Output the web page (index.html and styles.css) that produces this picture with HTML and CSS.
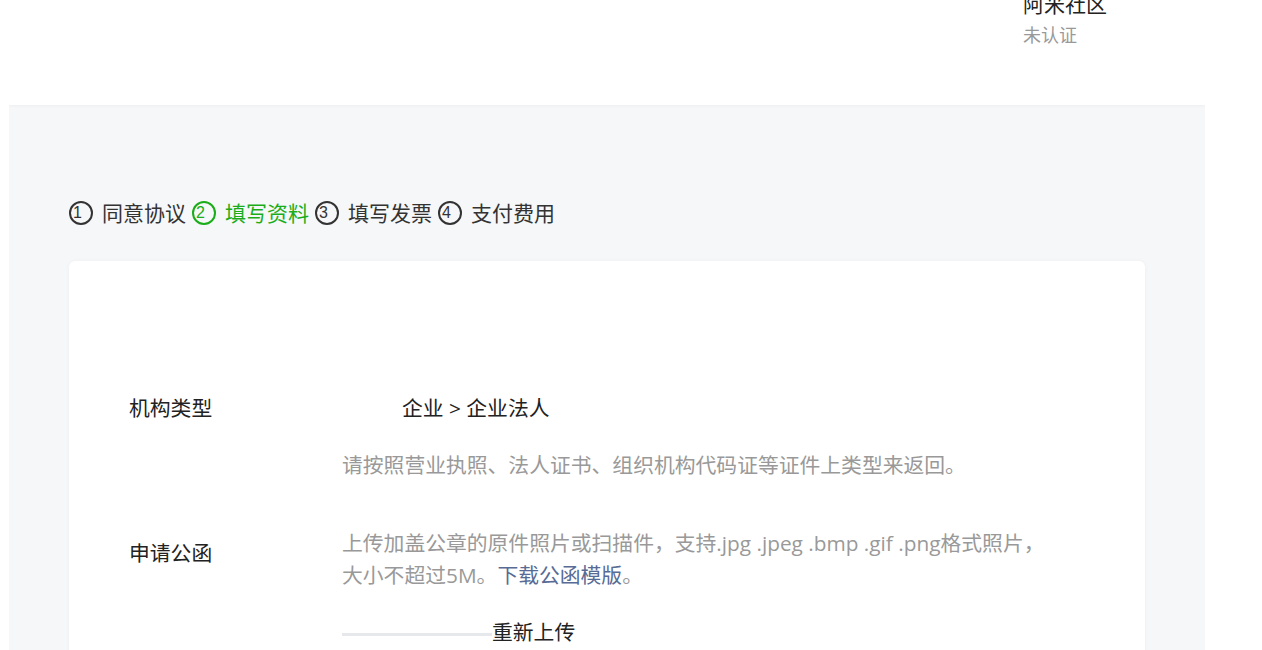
FILE: index.html
```html
<!DOCTYPE html>
<html lang="zh-CN">
  <head>
    <meta charset="UTF-8" />
    <meta name="viewport" content="width=device-width, initial-scale=1.0" />
    <title>填写资料</title>
    <link rel="stylesheet" href="styles.css">
  </head>
  <body>
    <div class="page">
      <div class="header">
        <div class="user">
          <p class="user-name">阿米社区</p>
          <p class="user-status">未认证</p>
        </div>
      </div>

      <div class="steps">
        <span class="step"><span class="num">1</span>同意协议</span>
        <span class="step active"><span class="num">2</span>填写资料</span>
        <span class="step"><span class="num">3</span>填写发票</span>
        <span class="step"><span class="num">4</span>支付费用</span>
      </div>

      <div class="card">
        <div class="row">
          <div class="label">机构类型</div>
          <div class="field">
            <p class="value">企业 &gt; 企业法人</p>
            <p class="tip">请按照营业执照、法人证书、组织机构代码证等证件上类型来返回。</p>
          </div>
        </div>

        <div class="row row-letter">
          <div class="label">申请公函</div>
          <div class="field">
            <p class="tip">上传加盖公章的原件照片或扫描件，支持.jpg .jpeg .bmp .gif .png格式照片，<br>大小不超过5M。<a href="#" class="link">下载公函模版</a>。</p>
            <div class="upload">
              <span class="bar"></span>
              <span class="reupload">重新上传</span>
            </div>
          </div>
        </div>
      </div>
    </div>
  </body>
</html>
```

FILE: styles.css
```css
body {
  margin: 0;
  background-color: #fff;
  font-family: "Open Sans", "Noto Sans CJK SC", sans-serif;
  color: #333;
}

p {
  margin: 0;
}

.page {
  margin-left: 9px;
  width: 1196px;
  min-height: 650px;
  background-color: #f6f7f9;
  overflow: hidden;
}

.header {
  height: 105px;
  background-color: #fff;
  box-shadow: 0 1px 3px rgba(0, 0, 0, 0.04);
  overflow: hidden;
}

.user {
  margin-left: 1014px;
  margin-top: -11px;
}

.user-name {
  font-size: 21px;
  line-height: 30px;
  color: #222;
}

.user-status {
  font-size: 18px;
  line-height: 28px;
  color: #999;
  margin-top: 2px;
}

.steps {
  display: flex;
  align-items: center;
  margin: 94px 0 0 60px;
  font-size: 21px;
  line-height: 28px;
  color: #333;
}

.step {
  display: flex;
  align-items: center;
  margin-right: 6px;
}

.step .num {
  width: 20px;
  height: 20px;
  border: 2px solid #333;
  border-radius: 50%;
  font-size: 16px;
  line-height: 20px;
  text-indent: 2px;
  margin-right: 9px;
  font-family: "Liberation Sans", sans-serif;
}

.step.active {
  color: #1aad19;
}

.step.active .num {
  border-color: #1aad19;
}

.card {
  margin: 34px 0 0 60px;
  width: 1076px;
  height: 420px;
  background-color: #fff;
  border-radius: 6px;
  box-shadow: 0 0 4px rgba(0, 0, 0, 0.04);
  padding-top: 131px;
  box-sizing: border-box;
}

.row {
  display: flex;
  padding-left: 60px;
  font-size: 20.8px;
  line-height: 32px;
}

.label {
  width: 213px;
  flex-shrink: 0;
  color: #222;
}

.value {
  margin-left: 60px;
  color: #222;
}

.tip {
  margin-top: 25px;
  color: #999;
}

.row-letter {
  margin-top: 46px;
}

.row-letter .label {
  padding-top: 10px;
}

.row-letter .tip {
  margin-top: 0;
}

.link {
  color: #576b95;
  text-decoration: none;
}

.upload {
  display: flex;
  align-items: center;
  margin-top: 25px;
}

.bar {
  width: 150px;
  height: 3px;
  background-color: #e6e8eb;
  margin-top: 4px;
}

.reupload {
  color: #222;
}
```
